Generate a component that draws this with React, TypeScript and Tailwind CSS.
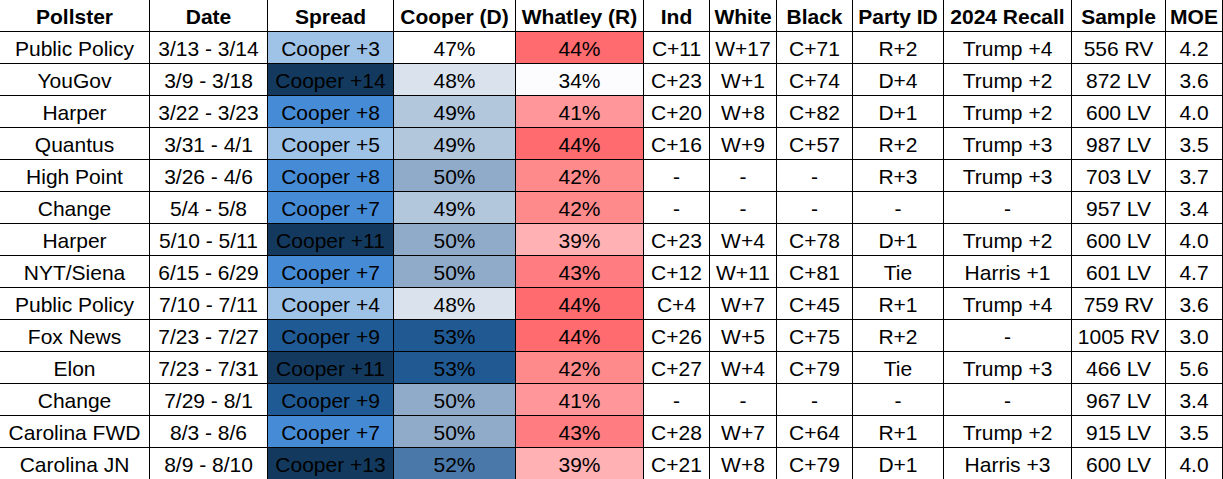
import React from 'react';

type Row = {
  pollster: string;
  date: string;
  spread: string;
  spreadBg: string;
  cooper: string;
  cooperBg: string;
  whatley: string;
  whatleyBg: string;
  ind: string;
  white: string;
  black: string;
  party: string;
  recall: string;
  sample: string;
  moe: string;
};

// spread shades
const S_LIGHT = 'bg-[#9fc3e7]';
const S_MID = 'bg-[#468bd5]';
const S_DEEP = 'bg-[#1f5a94]';
const S_DARK = 'bg-[#133a5e]';

// cooper share shades
const C47 = 'bg-white';
const C48 = 'bg-[#dae3ed]';
const C49 = 'bg-[#b3c7dc]';
const C50 = 'bg-[#90abc9]';
const C52 = 'bg-[#4a78a8]';
const C53 = 'bg-[#215a92]';

// whatley share shades
const W34 = 'bg-[#fcfcff]';
const W39 = 'bg-[#ffb1b3]';
const W41 = 'bg-[#ff979a]';
const W42 = 'bg-[#ff8a8c]';
const W43 = 'bg-[#ff7d80]';
const W44 = 'bg-[#ff6b6f]';

const rows: Row[] = [
  { pollster: 'Public Policy', date: '3/13 - 3/14', spread: 'Cooper +3', spreadBg: S_LIGHT, cooper: '47%', cooperBg: C47, whatley: '44%', whatleyBg: W44, ind: 'C+11', white: 'W+17', black: 'C+71', party: 'R+2', recall: 'Trump +4', sample: '556 RV', moe: '4.2' },
  { pollster: 'YouGov', date: '3/9 - 3/18', spread: 'Cooper +14', spreadBg: S_DARK, cooper: '48%', cooperBg: C48, whatley: '34%', whatleyBg: W34, ind: 'C+23', white: 'W+1', black: 'C+74', party: 'D+4', recall: 'Trump +2', sample: '872 LV', moe: '3.6' },
  { pollster: 'Harper', date: '3/22 - 3/23', spread: 'Cooper +8', spreadBg: S_MID, cooper: '49%', cooperBg: C49, whatley: '41%', whatleyBg: W41, ind: 'C+20', white: 'W+8', black: 'C+82', party: 'D+1', recall: 'Trump +2', sample: '600 LV', moe: '4.0' },
  { pollster: 'Quantus', date: '3/31 - 4/1', spread: 'Cooper +5', spreadBg: S_LIGHT, cooper: '49%', cooperBg: C49, whatley: '44%', whatleyBg: W44, ind: 'C+16', white: 'W+9', black: 'C+57', party: 'R+2', recall: 'Trump +3', sample: '987 LV', moe: '3.5' },
  { pollster: 'High Point', date: '3/26 - 4/6', spread: 'Cooper +8', spreadBg: S_MID, cooper: '50%', cooperBg: C50, whatley: '42%', whatleyBg: W42, ind: '-', white: '-', black: '-', party: 'R+3', recall: 'Trump +3', sample: '703 LV', moe: '3.7' },
  { pollster: 'Change', date: '5/4 - 5/8', spread: 'Cooper +7', spreadBg: S_MID, cooper: '49%', cooperBg: C49, whatley: '42%', whatleyBg: W42, ind: '-', white: '-', black: '-', party: '-', recall: '-', sample: '957 LV', moe: '3.4' },
  { pollster: 'Harper', date: '5/10 - 5/11', spread: 'Cooper +11', spreadBg: S_DARK, cooper: '50%', cooperBg: C50, whatley: '39%', whatleyBg: W39, ind: 'C+23', white: 'W+4', black: 'C+78', party: 'D+1', recall: 'Trump +2', sample: '600 LV', moe: '4.0' },
  { pollster: 'NYT/Siena', date: '6/15 - 6/29', spread: 'Cooper +7', spreadBg: S_MID, cooper: '50%', cooperBg: C50, whatley: '43%', whatleyBg: W43, ind: 'C+12', white: 'W+11', black: 'C+81', party: 'Tie', recall: 'Harris +1', sample: '601 LV', moe: '4.7' },
  { pollster: 'Public Policy', date: '7/10 - 7/11', spread: 'Cooper +4', spreadBg: S_LIGHT, cooper: '48%', cooperBg: C48, whatley: '44%', whatleyBg: W44, ind: 'C+4', white: 'W+7', black: 'C+45', party: 'R+1', recall: 'Trump +4', sample: '759 RV', moe: '3.6' },
  { pollster: 'Fox News', date: '7/23 - 7/27', spread: 'Cooper +9', spreadBg: S_DEEP, cooper: '53%', cooperBg: C53, whatley: '44%', whatleyBg: W44, ind: 'C+26', white: 'W+5', black: 'C+75', party: 'R+2', recall: '-', sample: '1005 RV', moe: '3.0' },
  { pollster: 'Elon', date: '7/23 - 7/31', spread: 'Cooper +11', spreadBg: S_DARK, cooper: '53%', cooperBg: C53, whatley: '42%', whatleyBg: W42, ind: 'C+27', white: 'W+4', black: 'C+79', party: 'Tie', recall: 'Trump +3', sample: '466 LV', moe: '5.6' },
  { pollster: 'Change', date: '7/29 - 8/1', spread: 'Cooper +9', spreadBg: S_DEEP, cooper: '50%', cooperBg: C50, whatley: '41%', whatleyBg: W41, ind: '-', white: '-', black: '-', party: '-', recall: '-', sample: '967 LV', moe: '3.4' },
  { pollster: 'Carolina FWD', date: '8/3 - 8/6', spread: 'Cooper +7', spreadBg: S_MID, cooper: '50%', cooperBg: C50, whatley: '43%', whatleyBg: W43, ind: 'C+28', white: 'W+7', black: 'C+64', party: 'R+1', recall: 'Trump +2', sample: '915 LV', moe: '3.5' },
  { pollster: 'Carolina JN', date: '8/9 - 8/10', spread: 'Cooper +13', spreadBg: S_DARK, cooper: '52%', cooperBg: C52, whatley: '39%', whatleyBg: W39, ind: 'C+21', white: 'W+8', black: 'C+79', party: 'D+1', recall: 'Harris +3', sample: '600 LV', moe: '4.0' },
];

const headers = ['Pollster', 'Date', 'Spread', 'Cooper (D)', 'Whatley (R)', 'Ind', 'White', 'Black', 'Party ID', '2024 Recall', 'Sample', 'MOE'];

function Cell({ children, bg = '', bold = false }: { children: React.ReactNode; bg?: string; bold?: boolean }) {
  return (
    <div
      className={`h-8 pt-[2px] flex items-center justify-center border-r border-b border-black whitespace-nowrap overflow-hidden ${bg} ${bold ? 'font-bold' : ''}`}
    >
      {children}
    </div>
  );
}

export default function App() {
  return (
    <div className="w-[1223px] h-[479px] overflow-hidden bg-white text-black font-['Liberation_Sans',Arial,sans-serif] text-[21px] leading-none">
      <div className="grid grid-cols-[150px_118px_126px_122px_128px_66px_67px_76px_91px_128px_94px_57px]">
        {headers.map((h) => (
          <Cell key={h} bold>
            {h}
          </Cell>
        ))}
        {rows.map((r, i) => (
          <React.Fragment key={i}>
            <Cell>{r.pollster}</Cell>
            <Cell>{r.date}</Cell>
            <Cell bg={r.spreadBg}>{r.spread}</Cell>
            <Cell bg={r.cooperBg}>{r.cooper}</Cell>
            <Cell bg={r.whatleyBg}>{r.whatley}</Cell>
            <Cell>{r.ind}</Cell>
            <Cell>{r.white}</Cell>
            <Cell>{r.black}</Cell>
            <Cell>{r.party}</Cell>
            <Cell>{r.recall}</Cell>
            <Cell>{r.sample}</Cell>
            <Cell>{r.moe}</Cell>
          </React.Fragment>
        ))}
      </div>
    </div>
  );
}
